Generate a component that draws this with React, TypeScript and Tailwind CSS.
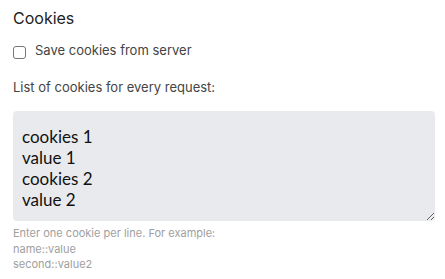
import React from "react";

export default function App() {
  return (
    <div className="w-[445px] h-[279px] bg-white px-[13px] pt-[8px]" style={{ fontFamily: "Inter, 'Noto Sans', sans-serif" }}>
      <h2 className="text-[16px] leading-[20px] text-[#222] font-normal">Cookies</h2>
      <label className="mt-[13px] flex items-start gap-[9px] text-[13px] leading-[18px] text-[#444]">
        <span className="mt-[5px] w-[13px] h-[13px] rounded-[3px] border border-[#767676] bg-white shrink-0"></span>
        <span>Save cookies from server</span>
      </label>
      <div className="mt-[19px] text-[13px] leading-[18px] text-[#444]">List of cookies for every request:</div>
      <textarea
        className="mt-[15px] block w-[422px] h-[110px] rounded-[4px] bg-[#e9eaed] pl-[9px] pr-2 pt-[15px] pb-[8px] text-[17px] leading-[21px] text-[#111] outline-none resize-y"
        style={{ fontFamily: "Lato, 'Noto Sans', sans-serif" }}
        defaultValue={"cookies 1\nvalue 1\ncookies 2\nvalue 2"}
      />
      <div className="mt-[5px] text-[11px] leading-[15.5px] text-[#a0a0a0]">
        <div>Enter one cookie per line. For example:</div>
        <div>name::value</div>
        <div>second::value2</div>
      </div>
    </div>
  );
}
